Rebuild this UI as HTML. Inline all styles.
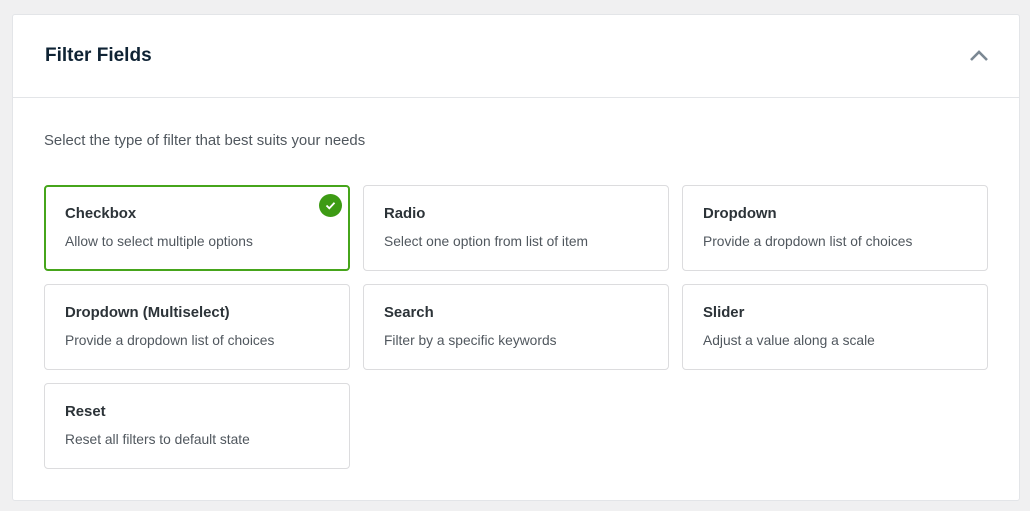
<!DOCTYPE html>
<html><head><style>
body{margin:0;width:1030px;height:511px;background:#f0f0f1;font-family:"Liberation Sans",sans-serif;position:relative;overflow:hidden}
.panel{position:absolute;left:12px;top:14px;width:1008px;height:487px;background:#fff;border:1px solid #e3e5e8;border-radius:3px;box-sizing:border-box}
.hd{position:absolute;left:0;top:0;right:0;height:82px;border-bottom:1px solid #e3e5e8}
.hd h2{position:absolute;left:32px;top:30px;margin:0;font-size:19px;font-weight:bold;color:#0f2334}
.sub{position:absolute;left:31px;top:118px;font-size:14.9px;color:#50575e}
.c{position:absolute;width:306px;height:86px;border:1px solid #dcdcde;border-radius:4px;box-sizing:border-box;background:#fff}
.c b{position:absolute;left:20px;top:20px;font-size:14.9px;color:#2c3338}
.c span{position:absolute;left:20px;top:48px;font-size:13.8px;color:#50575e}
.sel{border:2px solid #46a51b}
.sel b{left:19px;top:19px}.sel span{left:19px;top:47px}
.chk{position:absolute;right:6px;top:7px;width:23px;height:23px;border-radius:50%;background:#3d9b14}
</style></head><body>
<div class="panel">
<div class="hd"><h2>Filter Fields</h2>
<svg style="position:absolute;left:956px;top:34px" width="20" height="14" viewBox="0 0 20 14"><path d="M2 11 L10 3 L18 11" fill="none" stroke="#7b8893" stroke-width="2.6"/></svg></div>
<div class="sub">Select the type of filter that best suits your needs</div>
</div>
<div class="c sel" style="left:44px;top:185px"><b>Checkbox</b><span>Allow to select multiple options</span><div class="chk"><svg width="23" height="23" viewBox="0 0 23 23"><path d="M7.5 11.5 L10.3 14.3 L15.5 8.8" fill="none" stroke="#fff" stroke-width="1.8"/></svg></div></div>
<div class="c" style="left:363px;top:185px"><b>Radio</b><span>Select one option from list of item</span></div>
<div class="c" style="left:682px;top:185px"><b>Dropdown</b><span>Provide a dropdown list of choices</span></div>
<div class="c" style="left:44px;top:284px"><b>Dropdown (Multiselect)</b><span>Provide a dropdown list of choices</span></div>
<div class="c" style="left:363px;top:284px"><b>Search</b><span>Filter by a specific keywords</span></div>
<div class="c" style="left:682px;top:284px"><b>Slider</b><span>Adjust a value along a scale</span></div>
<div class="c" style="left:44px;top:383px"><b>Reset</b><span>Reset all filters to default state</span></div>
</body></html>
